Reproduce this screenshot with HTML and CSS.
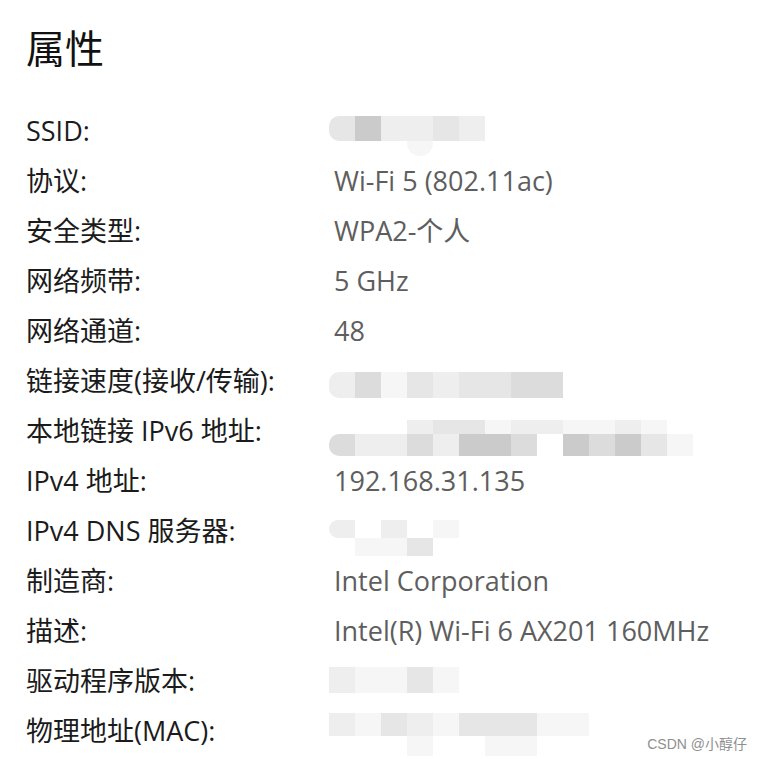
FILE: index.html
```html
<!DOCTYPE html>
<html lang="zh-CN">
<head>
<meta charset="utf-8">
<title>属性</title>
<link rel="stylesheet" href="styles.css">
</head>
<body>
<main class="page">
  <h1 class="title">属性</h1>
  <dl class="props">
    <div class="row"><dt>SSID:</dt><dd>
      <div class="mosaic m-ssid">
        <div class="mrow"><span class="b s3 rl"></span><span class="b s5"></span><span class="b s2"></span><span class="b s2"></span><span class="b s3"></span><span class="b s2"></span></div>
        <div class="mrow short"><span class="b s0"></span><span class="b s0"></span><span class="b s0"></span><span class="b s1 dot"></span></div>
      </div>
    </dd></div>
    <div class="row"><dt>协议:</dt><dd>Wi-Fi 5 (802.11ac)</dd></div>
    <div class="row"><dt>安全类型:</dt><dd>WPA2-个人</dd></div>
    <div class="row"><dt>网络频带:</dt><dd>5 GHz</dd></div>
    <div class="row"><dt>网络通道:</dt><dd>48</dd></div>
    <div class="row"><dt>链接速度(接收/传输):</dt><dd>
      <div class="mosaic m-speed">
        <div class="mrow"><span class="b s2 rl"></span><span class="b s4"></span><span class="b s1"></span><span class="b s3"></span><span class="b s2"></span><span class="b s3"></span><span class="b s3"></span><span class="b s4"></span><span class="b s4"></span></div>
      </div>
    </dd></div>
    <div class="row"><dt>本地链接 IPv6 地址:</dt><dd>
      <div class="mosaic m-ipv6">
        <div class="mrow half"><span class="b s0"></span><span class="b s0"></span><span class="b s0"></span><span class="b s2"></span><span class="b s3"></span><span class="b s3"></span><span class="b s1"></span><span class="b s2"></span><span class="b s2"></span><span class="b s1"></span><span class="b s1"></span><span class="b s2"></span><span class="b s1"></span></div>
        <div class="mrow low"><span class="b s4 rl"></span><span class="b s2"></span><span class="b s2"></span><span class="b s4"></span><span class="b s2"></span><span class="b s5"></span><span class="b s5"></span><span class="b s4"></span><span class="b s0"></span><span class="b s5"></span><span class="b s4"></span><span class="b s5"></span><span class="b s3"></span><span class="b s1"></span></div>
      </div>
    </dd></div>
    <div class="row"><dt>IPv4 地址:</dt><dd>192.168.31.135</dd></div>
    <div class="row"><dt>IPv4 DNS 服务器:</dt><dd>
      <div class="mosaic m-dns">
        <div class="mrow mid"><span class="b s2 rl"></span><span class="b s0"></span><span class="b s2"></span><span class="b s0"></span><span class="b s1"></span></div>
        <div class="mrow mid"><span class="b s0"></span><span class="b s1"></span><span class="b s1"></span><span class="b s3"></span></div>
      </div>
    </dd></div>
    <div class="row"><dt>制造商:</dt><dd>Intel Corporation</dd></div>
    <div class="row"><dt>描述:</dt><dd>Intel(R) Wi-Fi 6 AX201 160MHz</dd></div>
    <div class="row"><dt>驱动程序版本:</dt><dd>
      <div class="mosaic m-drv">
        <div class="mrow"><span class="b s2"></span><span class="b s1"></span><span class="b s1"></span><span class="b s3"></span><span class="b s1"></span></div>
      </div>
    </dd></div>
    <div class="row"><dt>物理地址(MAC):</dt><dd>
      <div class="mosaic m-mac">
        <div class="mrow"><span class="b s2"></span><span class="b s1"></span><span class="b s3"></span><span class="b s2"></span><span class="b s1"></span><span class="b s3"></span><span class="b s3"></span><span class="b s3"></span><span class="b s1"></span><span class="b s1"></span></div>
        <div class="mrow low"><span class="b s0"></span><span class="b s0"></span><span class="b s0"></span><span class="b s1"></span><span class="b s0"></span><span class="b s0"></span><span class="b s1"></span><span class="b s1"></span></div>
      </div>
    </dd></div>
  </dl>
  <div class="watermark">CSDN @小醇仔</div>
</main>
</body>
</html>
```
FILE: styles.css
```css
* { box-sizing: border-box; }
html, body { margin: 0; padding: 0; background: #ffffff; }
body {
  width: 763px;
  height: 759px;
  overflow: hidden;
  font-family: "Open Sans", "Noto Sans CJK SC", sans-serif;
  color: #1b1b1b;
}
.page {
  position: relative;
  height: 759px;
  padding: 18px 0 0 26px;
}
.title {
  margin: 0;
  font-family: "Noto Sans CJK SC", sans-serif;
  font-weight: 400;
  font-size: 39px;
  line-height: 56px;
  color: #111;
}
.props {
  margin: 32px 0 0 0;
  display: flex;
  flex-direction: column;
}
.row {
  display: grid;
  grid-template-columns: 308px 1fr;
  height: 50px;
  align-items: center;
}
dt, dd {
  margin: 0;
  font-size: 27px;
  line-height: 50px;
  white-space: nowrap;
}
dt { color: #1b1b1b; }
dd { color: #5e5e5e; }
.mosaic {
  display: flex;
  flex-direction: column;
  height: 50px;
  margin-left: -5px;
}
.mrow { display: flex; height: 26px; }
.mrow.half { height: 14px; }
.mrow.mid { height: 18px; }
.mrow.low { height: 22px; }
.mrow.short { height: 16px; }
.b { width: 26px; height: 100%; flex: none; }
.s0 { background: transparent; }
.s1 { background: #f6f6f6; }
.s2 { background: #eeeeee; }
.s3 { background: #e6e6e6; }
.s4 { background: #dcdcdc; }
.s5 { background: #cbcbcb; }
.rl { border-radius: 10px 0 0 10px; }
.dot { border-radius: 0 0 13px 13px; }
.m-ssid { padding-top: 10px; }
.m-speed { padding-top: 16px; }
.m-ipv6 { padding-top: 14px; }
.m-dns { padding-top: 14px; }
.m-drv { padding-top: 11px; }
.m-mac { padding-top: 7px; }
.watermark {
  position: absolute;
  right: 16px;
  bottom: 6px;
  font-family: "Liberation Sans", "Noto Sans CJK SC", sans-serif;
  font-size: 14px;
  color: #8f8f8f;
}
```
